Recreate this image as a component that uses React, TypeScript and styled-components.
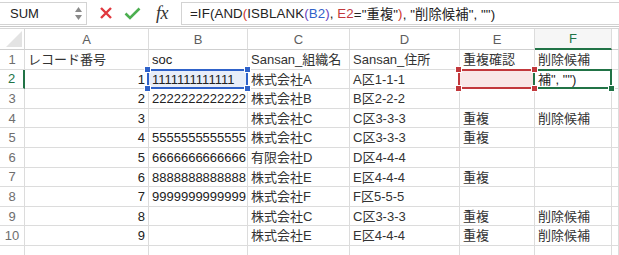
import React from "react";
import styled, { createGlobalStyle, css } from "styled-components";

const Global = createGlobalStyle`
  html, body { margin: 0; padding: 0; background: #fff; }
  body { font-family: "Liberation Sans", "Noto Sans CJK JP", sans-serif; color: #222; overflow: hidden; }
`;

const Page = styled.div`
  width: 619px;
  height: 255px;
  overflow: hidden;
  background: #fff;
`;

const FormulaBar = styled.div`
  height: 27px;
  box-sizing: border-box;
  display: flex;
  align-items: center;
  border-bottom: 1px solid #c9c9c9;
  margin-bottom: 1px;
`;

const NameBox = styled.div`
  width: 87px;
  height: 23px;
  box-sizing: border-box;
  border: 1px solid #d3d3d3;
  border-left: none;
  display: flex;
  align-items: center;
  justify-content: space-between;
  padding: 0 4px 0 10px;
  font-size: 13px;
  color: #222;
`;

const Spinner = styled.div`
  display: flex;
  flex-direction: column;
  gap: 3px;
  align-items: center;
`;

const Actions = styled.div`
  display: flex;
  align-items: center;
  width: 94px;
  padding-left: 12px;
  gap: 11px;
  box-sizing: border-box;
`;

const Fx = styled.span`
  font-family: "Liberation Serif", "DejaVu Serif", serif;
  font-style: italic;
  font-size: 18px;
  color: #333;
  letter-spacing: -0.5px;
  margin-left: 4px;
`;

const FormulaInput = styled.div`
  flex: 1;
  height: 23px;
  box-sizing: border-box;
  border: 1px solid #d3d3d3;
  border-right: none;
  display: flex;
  align-items: center;
  padding-left: 8px;
  font-size: 13.3px;
  letter-spacing: 0.1px;
  white-space: nowrap;
  color: #222;
`;

const Tok = styled.span<{ $c?: string }>`
  color: ${(p) => p.$c || "#222"};
`;

const Grid = styled.div`
  display: grid;
  grid-template-columns: 25px 124px 99px 102px 110px 75px 77px 1fr;
  grid-template-rows: 21px repeat(11, 19.6px);
  border-top: 1px solid #d6d6d6;
`;

const Corner = styled.div`
  position: relative;
  border-right: 1px solid #d6d6d6;
  border-bottom: 1px solid #cfcfcf;
  background: #fff;
  &::after {
    content: "";
    position: absolute;
    right: 2px;
    bottom: 2px;
    width: 0;
    height: 0;
    border-left: 16px solid transparent;
    border-bottom: 16px solid #e3e3e3;
  }
`;

const ColHead = styled.div<{ $active?: boolean }>`
  border-right: 1px solid #dcdcdc;
  border-bottom: 1px solid #cfcfcf;
  display: flex;
  align-items: center;
  justify-content: center;
  font-size: 13px;
  color: #5e5e5e;
  ${(p) =>
    p.$active &&
    css`
      color: #217346;
      background: #f6f6f6;
      border-bottom: 2px solid #217346;
    `}
`;

const RowHead = styled.div<{ $active?: boolean }>`
  border-right: 1px solid #dcdcdc;
  border-bottom: 1px solid #dcdcdc;
  display: flex;
  align-items: center;
  justify-content: center;
  font-size: 13px;
  color: #6e6e6e;
  ${(p) =>
    p.$active &&
    css`
      color: #217346;
      border-right: 2px solid #217346;
    `}
`;

type Sel = "blue" | "red" | "green";

const selColors: Record<Sel, { line: string; fill: string }> = {
  blue: { line: "#2f62c9", fill: "#e8eef9" },
  red: { line: "#c2383c", fill: "#f9e7e7" },
  green: { line: "#217346", fill: "transparent" },
};

const Cell = styled.div<{ $right?: boolean; $fill?: string }>`
  position: relative;
  border-right: 1px solid #dcdcdc;
  border-bottom: 1px solid #dcdcdc;
  padding: 0 3px;
  font-size: 13px;
  line-height: 19px;
  white-space: nowrap;
  color: #222;
  text-align: ${(p) => (p.$right ? "right" : "left")};
  background: ${(p) => p.$fill || "transparent"};
`;

const CellText = styled.span<{ $jp?: boolean }>`
  position: relative;
  z-index: 1;
  color: ${(p) => (p.$jp ? "#333" : "#222")};
`;

const Frame = styled.div<{ $sel: Sel }>`
  position: absolute;
  inset: -1px -1px -1px -2px;
  border: 2px solid ${(p) => selColors[p.$sel].line};
  pointer-events: none;
  z-index: 3;
`;

const Handle = styled.div<{ $sel: Sel; $v: "top" | "bottom"; $h: "left" | "right" }>`
  position: absolute;
  width: 7px;
  height: 7px;
  background: ${(p) => selColors[p.$sel].line};
  border: 1px solid #fff;
  box-sizing: border-box;
  ${(p) => (p.$v === "top" ? "top: -4px;" : "bottom: -4px;")}
  ${(p) => (p.$h === "left" ? "left: -5px;" : "right: -4px;")}
  z-index: 4;
`;

const Spacer = styled.div`
  border-right: 1px solid #dcdcdc;
  border-bottom: 1px solid #dcdcdc;
`;

const Arrow = ({ up }: { up?: boolean }) => (
  <svg width="7" height="5" viewBox="0 0 7 5">
    <path d={up ? "M0 5 L3.5 0 L7 5 Z" : "M0 0 L3.5 5 L7 0 Z"} fill="#8a8a8a" />
  </svg>
);

const XIcon = () => (
  <svg width="14" height="14" viewBox="0 0 14 14">
    <path d="M2 2 L12 12 M12 2 L2 12" stroke="#e0383f" strokeWidth="2.4" strokeLinecap="butt" />
  </svg>
);

const CheckIcon = () => (
  <svg width="17" height="13" viewBox="0 0 17 13">
    <path d="M1.5 6.5 L6 11 L15.5 1.5" stroke="#4caf50" strokeWidth="2.6" fill="none" />
  </svg>
);

type CellDef = { t?: string; right?: boolean; jp?: boolean; sel?: Sel };

const rows: CellDef[][] = [
  [
    { t: "レコード番号", jp: true },
    { t: "soc" },
    { t: "Sansan_組織名", jp: true },
    { t: "Sansan_住所", jp: true },
    { t: "重複確認", jp: true },
    { t: "削除候補", jp: true },
  ],
  [
    { t: "1", right: true },
    { t: "1111111111111", sel: "blue" },
    { t: "株式会社A", jp: true },
    { t: "A区1-1-1", jp: true },
    { sel: "red" },
    { t: "補\", \"\")", sel: "green" },
  ],
  [
    { t: "2", right: true },
    { t: "2222222222222" },
    { t: "株式会社B", jp: true },
    { t: "B区2-2-2", jp: true },
    {},
    {},
  ],
  [
    { t: "3", right: true },
    {},
    { t: "株式会社C", jp: true },
    { t: "C区3-3-3", jp: true },
    { t: "重複", jp: true },
    { t: "削除候補", jp: true },
  ],
  [
    { t: "4", right: true },
    { t: "5555555555555" },
    { t: "株式会社C", jp: true },
    { t: "C区3-3-3", jp: true },
    { t: "重複", jp: true },
    {},
  ],
  [
    { t: "5", right: true },
    { t: "6666666666666" },
    { t: "有限会社D", jp: true },
    { t: "D区4-4-4", jp: true },
    {},
    {},
  ],
  [
    { t: "6", right: true },
    { t: "8888888888888" },
    { t: "株式会社E", jp: true },
    { t: "E区4-4-4", jp: true },
    { t: "重複", jp: true },
    {},
  ],
  [
    { t: "7", right: true },
    { t: "9999999999999" },
    { t: "株式会社F", jp: true },
    { t: "F区5-5-5", jp: true },
    {},
    {},
  ],
  [
    { t: "8", right: true },
    {},
    { t: "株式会社C", jp: true },
    { t: "C区3-3-3", jp: true },
    { t: "重複", jp: true },
    { t: "削除候補", jp: true },
  ],
  [
    { t: "9", right: true },
    {},
    { t: "株式会社E", jp: true },
    { t: "E区4-4-4", jp: true },
    { t: "重複", jp: true },
    { t: "削除候補", jp: true },
  ],
  [{}, {}, {}, {}, {}, {}],
];

const cols = ["A", "B", "C", "D", "E", "F", ""];

export default function App() {
  return (
    <Page>
      <Global />
      <FormulaBar>
        <NameBox>
          <span>SUM</span>
          <Spinner>
            <Arrow up />
            <Arrow />
          </Spinner>
        </NameBox>
        <Actions>
          <XIcon />
          <CheckIcon />
          <Fx>fx</Fx>
        </Actions>
        <FormulaInput>
          <Tok>=IF(AND</Tok>
          <Tok $c="#d0342c">(</Tok>
          <Tok>ISBLANK</Tok>
          <Tok $c="#6a43c0">(</Tok>
          <Tok $c="#2f62c9">B2</Tok>
          <Tok $c="#6a43c0">)</Tok>
          <Tok>,&nbsp;</Tok>
          <Tok $c="#c2383c">E2</Tok>
          <Tok>="重複"</Tok>
          <Tok $c="#d0342c">)</Tok>
          <Tok>, "削除候補", "")</Tok>
        </FormulaInput>
      </FormulaBar>
      <Grid>
        <Corner />
        {cols.map((c, i) => (
          <ColHead key={i} $active={c === "F"}>
            {c}
          </ColHead>
        ))}
        {rows.map((r, ri) => (
          <React.Fragment key={ri}>
            <RowHead $active={ri === 1}>{ri < 10 ? ri + 1 : ""}</RowHead>
            {r.map((cell, ci) => (
              <Cell
                key={ci}
                $right={cell.right}
                $fill={cell.sel ? selColors[cell.sel].fill : undefined}
              >
                {cell.t && <CellText $jp={cell.jp}>{cell.t}</CellText>}
                {cell.sel && <Frame $sel={cell.sel} />}
                {cell.sel && cell.sel !== "green" && (
                  <>
                    <Handle $sel={cell.sel} $v="top" $h="left" />
                    <Handle $sel={cell.sel} $v="top" $h="right" />
                    <Handle $sel={cell.sel} $v="bottom" $h="left" />
                    <Handle $sel={cell.sel} $v="bottom" $h="right" />
                  </>
                )}
                {cell.sel === "green" && <Handle $sel="green" $v="bottom" $h="right" />}
              </Cell>
            ))}
            <Spacer />
          </React.Fragment>
        ))}
      </Grid>
    </Page>
  );
}
